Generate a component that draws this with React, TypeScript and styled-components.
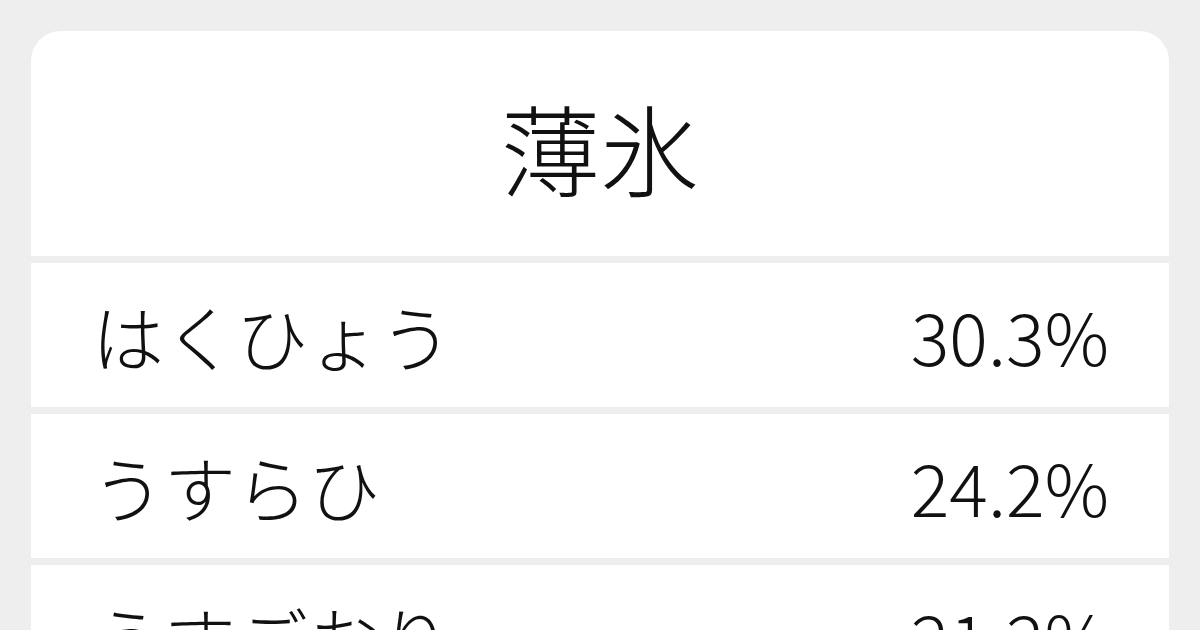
import styled, { createGlobalStyle } from "styled-components";

const GlobalStyle = createGlobalStyle`
  html, body {
    margin: 0;
    padding: 0;
    background: #eeeeee;
  }
  body {
    font-family: "Noto Sans CJK JP", "Noto Sans", sans-serif;
    color: #111111;
  }
`;

const Page = styled.div`
  width: 1200px;
  height: 630px;
  overflow: hidden;
  box-sizing: border-box;
  padding: 31px 31px 0 31px;
`;

const Card = styled.div`
  display: flex;
  flex-direction: column;
  gap: 7px;
  border-radius: 30px 30px 0 0;
  overflow: hidden;
  background: #eeeeee;
`;

const Header = styled.div`
  height: 225px;
  background: #ffffff;
  display: flex;
  align-items: center;
  justify-content: center;
`;

const Word = styled.h1`
  margin: 0;
  font-size: 99px;
  font-weight: 300;
  line-height: 1;
  padding-top: 6px;
`;

const Row = styled.div`
  height: 144px;
  flex-shrink: 0;
  background: #ffffff;
  display: flex;
  align-items: center;
  justify-content: space-between;
  padding: 0 60px 0 61px;
  font-size: 72px;
  font-weight: 300;
  line-height: 1;
`;

const Reading = styled.span``;

const Percent = styled.span`
  font-family: "Noto Sans CJK JP", "Noto Sans", sans-serif;
`;

const readings = [
  { kana: "はくひょう", rate: "30.3%" },
  { kana: "うすらひ", rate: "24.2%" },
  { kana: "うすごおり", rate: "21.2%" },
];

const App = () => {
  return (
    <Page>
      <GlobalStyle />
      <Card>
        <Header>
          <Word>薄氷</Word>
        </Header>
        {readings.map((r) => (
          <Row key={r.kana}>
            <Reading>{r.kana}</Reading>
            <Percent>{r.rate}</Percent>
          </Row>
        ))}
      </Card>
    </Page>
  );
};

export default App;
